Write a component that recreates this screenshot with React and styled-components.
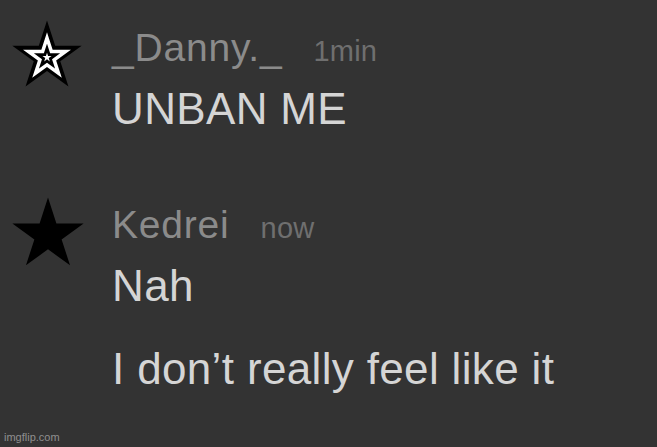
import React from "react";
import styled, { createGlobalStyle } from "styled-components";

const GlobalStyle = createGlobalStyle`
  html, body {
    margin: 0;
    padding: 0;
    background: #333333;
  }
  #root {
    width: 657px;
    height: 447px;
  }
`;

const Page = styled.div`
  position: relative;
  width: 657px;
  height: 447px;
  box-sizing: border-box;
  padding: 19.5px 0 0 10px;
  background: #333333;
  overflow: hidden;
  font-family: "Liberation Sans", Arial, Helvetica, sans-serif;
  display: flex;
  flex-direction: column;
`;

const Row = styled.div`
  display: flex;
  align-items: flex-start;
  margin-top: ${(p) => p.$offset || 0}px;
`;

const AvatarSvg = styled.svg`
  flex: none;
  display: block;
`;

const Content = styled.div`
  display: flex;
  flex-direction: column;
  margin-left: ${(p) => p.$indent}px;
  padding-top: 5px;
`;

const NameLine = styled.div`
  display: flex;
  align-items: baseline;
  height: 46px;
  line-height: 46px;
`;

const Name = styled.span`
  font-size: 39px;
  letter-spacing: 0.8px;
  color: #8b8b8b;
`;

const Time = styled.span`
  font-size: 29px;
  letter-spacing: 0.2px;
  color: #6f6f6f;
  margin-left: 31px;
`;

const Bubbles = styled.div`
  display: flex;
  flex-direction: column;
  gap: 29px;
  margin-top: 11px;
`;

const Text = styled.div`
  font-size: 44px;
  line-height: 54px;
  letter-spacing: 0.35px;
  color: #d5d5d5;
  white-space: nowrap;
`;

const Watermark = styled.div`
  position: absolute;
  left: 4px;
  bottom: 3px;
  font-size: 11px;
  line-height: 13px;
  color: #8f8f8f;
  font-family: "Liberation Sans", Arial, sans-serif;
`;

function starPoints(cx, cy, R, ratio = 0.382) {
  const r = R * ratio;
  const pts = [];
  for (let i = 0; i < 10; i++) {
    const rad = i % 2 === 0 ? R : r;
    const a = (Math.PI / 5) * i - Math.PI / 2;
    pts.push(`${(cx + rad * Math.cos(a)).toFixed(2)},${(cy + rad * Math.sin(a)).toFixed(2)}`);
  }
  return pts.join(" ");
}

function Star({ size, decorated }) {
  return (
    <AvatarSvg width={size} height={size} viewBox="0 0 74 74">
      <polygon points={starPoints(37, 37, 36.5)} fill="#000" />
      {decorated && (
        <>
          <polygon
            points={starPoints(37, 37.5, 19.5)}
            fill="#000"
            stroke="#fff"
            strokeWidth="3.5"
            strokeLinejoin="miter"
          />
          <polygon points={starPoints(37, 37.5, 4.8)} fill="#fff" />
        </>
      )}
    </AvatarSvg>
  );
}

const messages = [
  { name: "_Danny._", time: "1min", lines: ["UNBAN ME"], decorated: true, size: 74, offset: 0 },
  { name: "Kedrei", time: "now", lines: ["Nah", "I don\u2019t really feel like it"], decorated: false, size: 76, offset: 61.5 },
];

export default function App() {
  return (
    <>
      <GlobalStyle />
      <Page>
        {messages.map((m) => (
          <Row key={m.name} $offset={m.offset}>
            <Star size={m.size} decorated={m.decorated} />
            <Content $indent={102 - m.size}>
              <NameLine>
                <Name>{m.name}</Name>
                <Time>{m.time}</Time>
              </NameLine>
              <Bubbles>
                {m.lines.map((l) => (
                  <Text key={l}>{l}</Text>
                ))}
              </Bubbles>
            </Content>
          </Row>
        ))}
        <Watermark>imgflip.com</Watermark>
      </Page>
    </>
  );
}
